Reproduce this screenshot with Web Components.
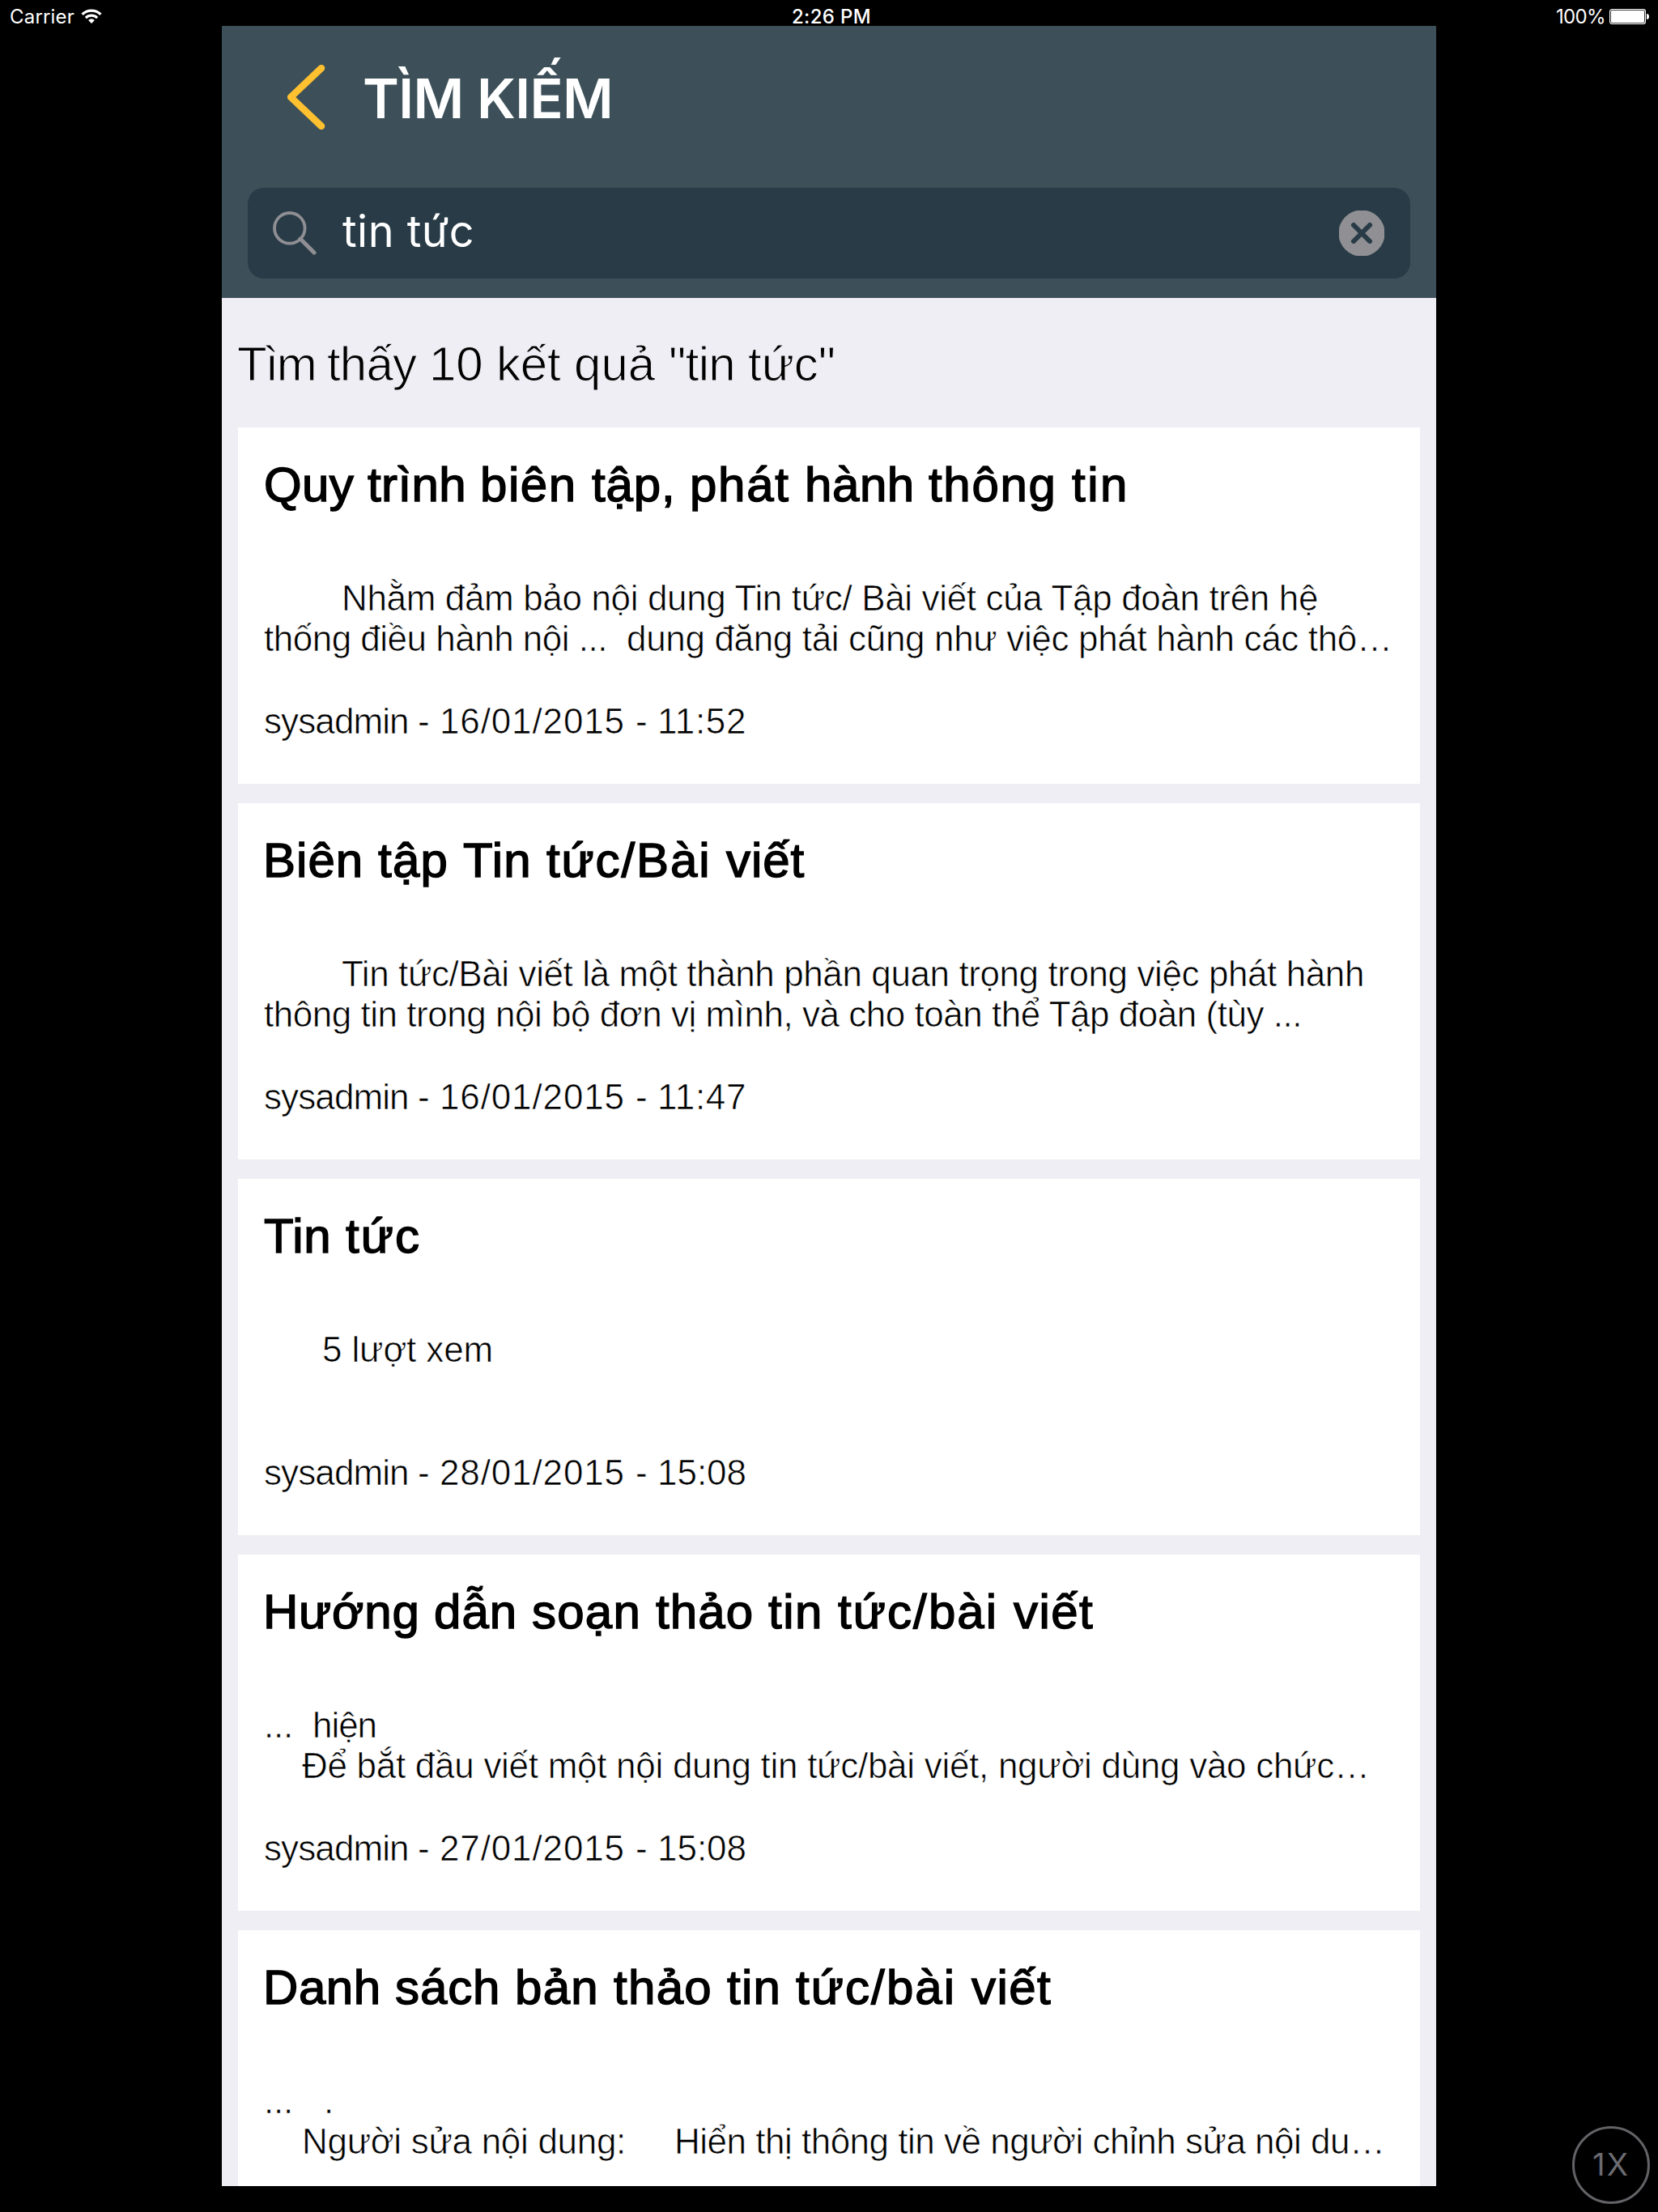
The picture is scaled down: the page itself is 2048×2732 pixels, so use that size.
<!DOCTYPE html>
<html lang="vi">
<head>
<meta charset="utf-8">
<title>Tìm kiếm</title>
<style>
  html, body { margin: 0; background: #000; }
  body { width: 2048px; height: 2732px; overflow: hidden; }
</style>
</head>
<body>
<search-screen></search-screen>

<template id="t-run">
  <style>
    :host { display: block; flex: none; margin-left: var(--gap, 0px); }
    div { width: max-content; white-space: pre; }
  </style>
  <div></div>
</template>

<template id="t-status">
  <style>
    :host { display: grid; grid-template-columns: 1fr auto 1fr; height: 32px; padding: 0 11px 0 12px; box-sizing: border-box;
      font: 400 24px/41px Inter, sans-serif; color: #fff; }
    div { display: flex; align-items: flex-start; }
    .l { gap: 8px; }
    .c { font-weight: 550; padding-left: 5px; }
    .r { justify-content: flex-end; gap: 5px; }
    svg { display: block; margin-top: 11px; flex: none; }
  </style>
  <div class="l"><text-run w="80">Carrier</text-run>
    <svg width="26" height="19" viewBox="0 0 26 19" fill="none" stroke="#fff">
      <path d="M1.6 6.8a16.2 16.2 0 0 1 22.8 0" stroke-width="3.4"/>
      <path d="M5.9 11.1a10.2 10.2 0 0 1 14.2 0" stroke-width="3.2"/>
      <path d="M13 18l-3.9-4.1a5.6 5.6 0 0 1 7.8 0z" fill="#fff" stroke="none"/>
    </svg>
  </div>
  <div class="c"><text-run w="98">2:26 PM</text-run></div>
  <div class="r"><text-run w="61">100%</text-run>
    <svg width="49" height="19" viewBox="0 0 49 19">
      <rect x=".6" y=".6" width="43.8" height="17.8" rx="2.6" fill="none" stroke="#fff" stroke-width="1.2"/>
      <rect x="2" y="2" width="41" height="15" rx="1.2" fill="#fff"/>
      <path d="M46 6c2 0 3 1.500 3 3.500s-1 3.500-3 3.500z" fill="#fff"/>
    </svg>
  </div>
</template>

<template id="t-nav">
  <style>
    :host { display: flex; height: 200px; padding-left: 80px; color: #fff; font: 600 68px/178.600px Inter, sans-serif; }
    svg { display: block; margin: 48px 46px 0 0; flex: none; }
  </style>
  <svg width="48" height="80" viewBox="0 0 48 80"><path d="M43 4.200L5.200 40 43 75.800" fill="none" stroke="#ffc12f" stroke-width="8.600" stroke-linecap="round" stroke-linejoin="round"/></svg>
  <text-run w="309"><slot></slot></text-run>
</template>

<template id="t-search">
  <style>
    :host { display: flex; align-items: flex-start; margin: 0 32px; height: 112px; box-sizing: border-box; padding: 0 32px 0 31px;
      border-radius: 20px; background: #283b46; color: #fff; font: 400 54px/108.500px Inter, sans-serif; }
    svg { display: block; flex: none; }
    .q { margin: 29px 32px 0 0; }
    .x { margin: 28px 0 0 auto; }
  </style>
  <svg class="q" width="54" height="54" viewBox="0 0 54 54" fill="none" stroke="#8e8e93"><circle cx="20.800" cy="20.800" r="18.800" stroke-width="3.800"/><path d="M34 34l17 17" stroke-width="5.200" stroke-linecap="round"/></svg>
  <text-run w="163"><slot></slot></text-run>
  <svg class="x" width="56" height="56" viewBox="0 0 56 56"><circle cx="28" cy="28" r="28.600" fill="#8f8f94"/><path d="M18 18l20 20M38 18L18 38" stroke="#283b46" stroke-width="6" stroke-linecap="round"/></svg>
</template>

<template id="t-result">
  <style>
    :host { display: flex; flex-direction: column; box-sizing: border-box; height: 440px; flex: none; padding: 36px 30px 0 32px; background: #fff; color: #000; font: 400 44px/50px "Liberation Sans", Arial, sans-serif; }
    .title { height: 70px; font-size: 60px; line-height: 70px; -webkit-text-stroke: 1.500px #000; margin-bottom: 80px; }
    .body { height: 100px; margin-bottom: 52px; }
    .line { display: flex; height: 50px; }
    .body, .meta { -webkit-text-stroke: .65px #fff; }
  </style>
  <div class="title"></div>
  <div class="body"></div>
  <div class="meta"></div>
</template>

<template id="t-zoom">
  <style>
    :host { display: flex; justify-content: center; position: absolute; right: 10px; bottom: 10px; width: 96px; height: 96px; box-sizing: border-box;
      border: 3px solid #636367; border-radius: 50%; color: #6b6b70; font: 400 38.500px/89px Inter, sans-serif; }
  </style>
  <text-run w="46">1X</text-run>
</template>

<template id="t-screen">
  <style>
    :host { display: block; position: relative; width: 2048px; height: 2732px; background: #000; overflow: hidden; }
    main { display: flex; flex-direction: column; width: 1500px; height: 2668px; margin: 0 auto; overflow: hidden; background: #efeef4; }
    header { height: 336px; flex: none; background: #3d5059; }
    .count { height: 160px; flex: none; padding-left: 19px; color: #000; font: 400 60px/163px "Liberation Sans", Arial, sans-serif; -webkit-text-stroke: 1px #efeef4; }
    .list { display: flex; flex-direction: column; gap: 24px; padding: 0 20px; }
  </style>
  <status-bar></status-bar>
  <main>
    <header><nav-bar>TÌM KIẾM</nav-bar><search-field>tin tức</search-field></header>
    <text-run class="count" w="111 126 83 96 117 98 108">Tìm thấy 10 kết quả "tin tức"</text-run>
    <div class="list"></div>
  </main>
  <zoom-button></zoom-button>
</template>

<script>
const stamp = (el, id) => {
  const root = el.attachShadow({ mode: 'open' });
  root.append(document.getElementById(id).content.cloneNode(true));
  return root;
};

/* One line of text whose tracking is set so that it fills the width `w`.
   With a list of widths, each word (with the space after it) fills its own. */
class TextRun extends HTMLElement {
  connectedCallback() {
    if (this.shadowRoot) return;
    const box = stamp(this, 't-run').querySelector('div');
    const text = this.querySelector('slot') ? this.getRootNode().host.textContent : this.textContent;
    const widths = (this.getAttribute('w') || '').split(' ').map(Number);
    const parts = widths.length > 1 ? text.match(/\S+ ?/g) : [text];
    parts.forEach((part, i) => {
      const span = document.createElement('span');
      span.textContent = part;
      box.append(span);
      if (widths[i]) {
        const natural = span.getBoundingClientRect().width;
        span.style.letterSpacing = ((widths[i] - natural) / [...part].length) + 'px';
      }
    });
  }
}
const run = (text, w, gap = 0) => {
  const r = document.createElement('text-run');
  r.textContent = text;
  if (w) r.setAttribute('w', w);
  r.style.setProperty('--gap', gap + 'px');
  return r;
};

class SearchResult extends HTMLElement {
  connectedCallback() {
    if (this.shadowRoot) return;
    const root = stamp(this, 't-result');
    const { title, lines, meta } = this.data;
    root.querySelector('.title').append(run(...title));
    for (const l of lines) {
      const d = document.createElement('div');
      d.className = 'line';
      root.querySelector('.body').append(d);
      l.forEach(s => d.append(run(...s)));
    }
    if (meta) root.querySelector('.meta').append(run(meta, '190 27 242 27 110'));
  }
}

const RESULTS = [
  { title: ['Quy trình biên tập, phát hành thông tin', '128 139 138 121 142 153 177 71'], meta: 'sysadmin - 16/01/2015 - 11:52', lines: [
    [['Nhằm đảm bảo nội dung Tin tức/ Bài viết của Tập đoàn trên hệ', 1206, 96]],
    [['thống điều hành nội ...', 424], ['dung đăng tải cũng như việc phát hành các thô', 902, 24], ['…', 45]]] },
  { title: ['Biên tập Tin tức/Bài viết', '142 105 103 222 97', -1], meta: 'sysadmin - 16/01/2015 - 11:47', lines: [
    [['Tin tức/Bài viết là một thành phần quan trọng trong việc phát hành', 1263, 96]],
    [['thông tin trong nội bộ đơn vị mình, và cho toàn thể Tập đoàn (tùy ...', 1282]]] },
  { title: ['Tin tức', '101 93'], meta: 'sysadmin - 28/01/2015 - 15:08', lines: [
    [['5 lượt xem', 211, 72]]] },
  { title: ['Hướng dẫn soạn thảo tin tức/bài viết', '211 121 153 139 86 217 99', -1], meta: 'sysadmin - 27/01/2015 - 15:08', lines: [
    [['...', 36], ['hiện', 79, 24]],
    [['Để bắt đầu viết một nội dung tin tức/bài viết, người dùng vào chức', 1275, 47], ['…', 45]]] },
  { title: ['Danh sách bản thảo tin tức/bài viết', '163 148 122 140 85 217 99', -1], lines: [
    [['...', 36], ['.', 0, 38]],
    [['Người sửa nội dung:', 400, 47], ['Hiển thị thông tin về người chỉnh sửa nội du', 834, 60], ['…', 45]]] },
];

class StatusBar extends HTMLElement { connectedCallback() { this.shadowRoot || stamp(this, 't-status'); } }
class NavBar extends HTMLElement { connectedCallback() { this.shadowRoot || stamp(this, 't-nav'); } }
class SearchField extends HTMLElement { connectedCallback() { this.shadowRoot || stamp(this, 't-search'); } }
class ZoomButton extends HTMLElement { connectedCallback() { this.shadowRoot || stamp(this, 't-zoom'); } }
class SearchScreen extends HTMLElement {
  connectedCallback() {
    const list = stamp(this, 't-screen').querySelector('.list');
    for (const data of RESULTS) {
      const el = document.createElement('search-result');
      el.data = data;
      list.append(el);
    }
  }
}
customElements.define('text-run', TextRun);
customElements.define('status-bar', StatusBar);
customElements.define('nav-bar', NavBar);
customElements.define('search-field', SearchField);
customElements.define('search-result', SearchResult);
customElements.define('zoom-button', ZoomButton);
customElements.define('search-screen', SearchScreen);
</script>
</body>
</html>
